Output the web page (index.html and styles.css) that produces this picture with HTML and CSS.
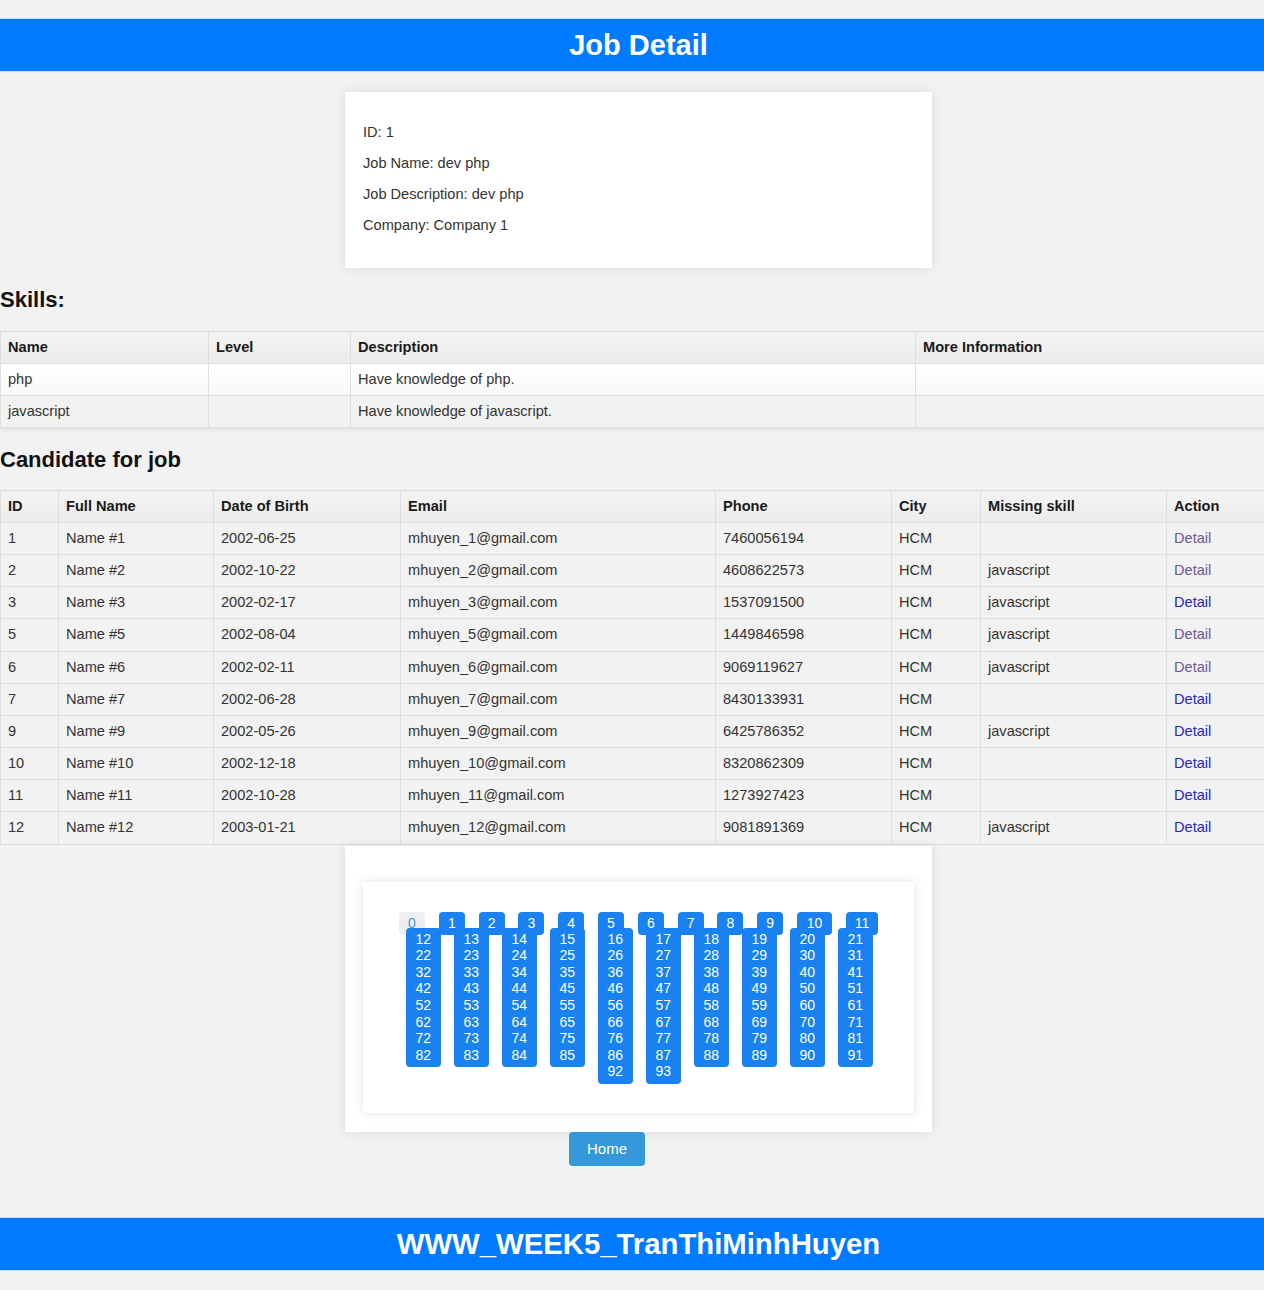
FILE: index.html
```html
<!DOCTYPE html>
<html>
<head>
<meta charset="utf-8">
<title>Job Detail</title>
<link rel="stylesheet" href="styles.css">
</head>
<body>
<div class="page">
  <header class="bar bar-top"><h1>Job Detail</h1></header>

  <section class="card info">
    <p>ID: 1</p>
    <p>Job Name: dev php</p>
    <p>Job Description: dev php</p>
    <p>Company: Company 1</p>
  </section>

  <h3 class="section-title">Skills:</h3>
  <table class="tbl skills">
    <colgroup>
      <col class="w208"><col class="w142"><col class="w565"><col>
    </colgroup>
    <thead>
      <tr><th>Name</th><th>Level</th><th>Description</th><th>More Information</th></tr>
    </thead>
    <tbody>
      <tr class="row-light"><td>php</td><td></td><td>Have knowledge of php.</td><td></td></tr>
      <tr><td>javascript</td><td></td><td>Have knowledge of javascript.</td><td></td></tr>
    </tbody>
  </table>

  <h3 class="section-title title-cands">Candidate for job</h3>
  <table class="tbl cands">
    <colgroup>
      <col class="c58"><col class="c155"><col class="c187"><col class="c315"><col class="c176"><col class="c89"><col class="c186"><col>
    </colgroup>
    <thead>
      <tr><th>ID</th><th>Full Name</th><th>Date of Birth</th><th>Email</th><th>Phone</th><th>City</th><th>Missing skill</th><th>Action</th></tr>
    </thead>
    <tbody>
      <tr><td>1</td><td>Name #1</td><td>2002-06-25</td><td>mhuyen_1@gmail.com</td><td>7460056194</td><td>HCM</td><td></td><td><a class="visited" href="#">Detail</a></td></tr>
      <tr><td>2</td><td>Name #2</td><td>2002-10-22</td><td>mhuyen_2@gmail.com</td><td>4608622573</td><td>HCM</td><td>javascript</td><td><a class="visited" href="#">Detail</a></td></tr>
      <tr><td>3</td><td>Name #3</td><td>2002-02-17</td><td>mhuyen_3@gmail.com</td><td>1537091500</td><td>HCM</td><td>javascript</td><td><a class="link" href="#">Detail</a></td></tr>
      <tr><td>5</td><td>Name #5</td><td>2002-08-04</td><td>mhuyen_5@gmail.com</td><td>1449846598</td><td>HCM</td><td>javascript</td><td><a class="visited" href="#">Detail</a></td></tr>
      <tr><td>6</td><td>Name #6</td><td>2002-02-11</td><td>mhuyen_6@gmail.com</td><td>9069119627</td><td>HCM</td><td>javascript</td><td><a class="visited" href="#">Detail</a></td></tr>
      <tr><td>7</td><td>Name #7</td><td>2002-06-28</td><td>mhuyen_7@gmail.com</td><td>8430133931</td><td>HCM</td><td></td><td><a class="link" href="#">Detail</a></td></tr>
      <tr><td>9</td><td>Name #9</td><td>2002-05-26</td><td>mhuyen_9@gmail.com</td><td>6425786352</td><td>HCM</td><td>javascript</td><td><a class="link" href="#">Detail</a></td></tr>
      <tr><td>10</td><td>Name #10</td><td>2002-12-18</td><td>mhuyen_10@gmail.com</td><td>8320862309</td><td>HCM</td><td></td><td><a class="link" href="#">Detail</a></td></tr>
      <tr><td>11</td><td>Name #11</td><td>2002-10-28</td><td>mhuyen_11@gmail.com</td><td>1273927423</td><td>HCM</td><td></td><td><a class="link" href="#">Detail</a></td></tr>
      <tr><td>12</td><td>Name #12</td><td>2003-01-21</td><td>mhuyen_12@gmail.com</td><td>9081891369</td><td>HCM</td><td>javascript</td><td><a class="link" href="#">Detail</a></td></tr>
    </tbody>
  </table>

  <section class="card pager-card">
    <div class="pager">
      <div class="tabs">
        <span class="tab tab-active">0</span>
        <span class="tab">1</span>
        <span class="tab">2</span>
        <span class="tab">3</span>
        <span class="tab">4</span>
        <span class="tab">5</span>
        <span class="tab">6</span>
        <span class="tab">7</span>
        <span class="tab">8</span>
        <span class="tab">9</span>
        <span class="tab tab-10">10</span>
        <span class="tab tab-11">11</span>
      </div>
      <div class="cols">
        <div class="col"><span>12</span><span>22</span><span>32</span><span>42</span><span>52</span><span>62</span><span>72</span><span>82</span></div>
        <div class="col"><span>13</span><span>23</span><span>33</span><span>43</span><span>53</span><span>63</span><span>73</span><span>83</span></div>
        <div class="col"><span>14</span><span>24</span><span>34</span><span>44</span><span>54</span><span>64</span><span>74</span><span>84</span></div>
        <div class="col"><span>15</span><span>25</span><span>35</span><span>45</span><span>55</span><span>65</span><span>75</span><span>85</span></div>
        <div class="col"><span>16</span><span>26</span><span>36</span><span>46</span><span>56</span><span>66</span><span>76</span><span>86</span><span>92</span></div>
        <div class="col"><span>17</span><span>27</span><span>37</span><span>47</span><span>57</span><span>67</span><span>77</span><span>87</span><span>93</span></div>
        <div class="col"><span>18</span><span>28</span><span>38</span><span>48</span><span>58</span><span>68</span><span>78</span><span>88</span></div>
        <div class="col"><span>19</span><span>29</span><span>39</span><span>49</span><span>59</span><span>69</span><span>79</span><span>89</span></div>
        <div class="col"><span>20</span><span>30</span><span>40</span><span>50</span><span>60</span><span>70</span><span>80</span><span>90</span></div>
        <div class="col"><span>21</span><span>31</span><span>41</span><span>51</span><span>61</span><span>71</span><span>81</span><span>91</span></div>
      </div>
    </div>
  </section>

  <div class="home-row"><a class="home-btn" href="#">Home</a></div>

  <footer class="bar bar-bottom"><h1>WWW_WEEK5_TranThiMinhHuyen</h1></footer>
</div>
</body>
</html>
```

FILE: styles.css
```css
html {
  overflow-x: hidden;
  background: #f2f2f2;
}
body {
  margin: 0;
  background: #f2f2f2;
  font-family: "Liberation Sans", Arial, sans-serif;
  color: #333;
}
.page {
  width: 1277px;
  padding-top: 19px;
  padding-bottom: 20px;
}
.bar {
  background: #007bff;
  height: 52px;
  display: flex;
  align-items: center;
  justify-content: center;
  box-shadow: 0 0 0 1px rgba(120, 180, 255, 0.35);
}
.bar h1 {
  margin: 0;
  color: #fff;
  font-size: 29px;
  font-weight: bold;
  line-height: 34px;
}
.bar-bottom h1 {
  font-size: 29.3px;
}
.card {
  background: #fff;
  width: 587px;
  margin: 0 auto;
  box-sizing: border-box;
  box-shadow: 0 0 10px rgba(0, 0, 0, 0.1);
}
.info {
  margin-top: 21px;
  padding: 17px 18px 20px;
  height: 176px;
}
.info p {
  margin: 15px 0;
  font-size: 14.6px;
  line-height: 16px;
  color: #333;
}
.section-title {
  margin: 19px 0;
  font-size: 22px;
  line-height: 25px;
  color: #111;
  font-weight: bold;
}
.title-cands {
  margin-bottom: 18px;
}
.tbl {
  width: 100%;
  border-collapse: collapse;
  table-layout: fixed;
  font-size: 14.6px;
}
.tbl th, .tbl td {
  border: 1px solid #dedede;
  padding: 7px 7px;
  line-height: 17px;
  text-align: left;
  white-space: nowrap;
  overflow: hidden;
}
.cands td {
  line-height: 17.15px;
}
.tbl th {
  font-weight: bold;
  color: #1a1a1a;
  background: linear-gradient(#f3f3f3, #ececec);
}
.tbl td {
  color: #333;
}
.skills {
  box-shadow: 0 2px 4px rgba(0, 0, 0, 0.08);
}
.skills thead tr {
  box-shadow: 0 2px 3px rgba(0, 0, 0, 0.06);
}
.row-light td {
  background: linear-gradient(#ffffff, #f8f8f8);
}
.w208 { width: 208px; }
.w142 { width: 142px; }
.w565 { width: 565px; }
.c58 { width: 58px; }
.c155 { width: 155px; }
.c187 { width: 187px; }
.c315 { width: 315px; }
.c176 { width: 176px; }
.c89 { width: 89px; }
.c186 { width: 186px; }
.cands td {
  background: #f2f2f2;
}
a.visited {
  color: #6c5a99;
  text-decoration: none;
}
a.link {
  color: #2626c9;
  text-decoration: none;
}
.pager-card {
  margin-top: 1px;
  padding: 36px 18px 19px;
  height: 286px;
}
.pager {
  background: #fff;
  height: 231px;
  box-sizing: border-box;
  padding: 30px 0 0 36px;
  box-shadow: 0 0 10px rgba(0, 0, 0, 0.12);
}
.tabs {
  display: flex;
  gap: 13.8px;
  height: 23px;
}
.tab {
  width: 26px;
  height: 23px;
  background: #1a82f0;
  color: #fff;
  border-radius: 4px;
  font-size: 14px;
  line-height: 23px;
  text-align: center;
}
.tab-active {
  background: #eeeeee;
  color: #4a90e2;
}
.tab-10 { width: 35px; }
.tab-11 { width: 32.5px; }
.cols {
  display: flex;
  align-items: flex-start;
  gap: 13.5px;
  margin-top: -7px;
  margin-left: 7px;
  position: relative;
}
.col {
  width: 34.5px;
  background: #1a82f0;
  border-radius: 4px;
  padding: 3px 0 4px;
  display: flex;
  flex-direction: column;
  align-items: center;
}
.col span {
  color: #fff;
  font-size: 14px;
  line-height: 16.6px;
}
.home-row {
  padding-left: 569px;
  padding-top: 0;
  height: 86px;
}
.home-btn {
  display: inline-block;
  width: 76px;
  height: 34px;
  line-height: 34px;
  text-align: center;
  background: #3498db;
  color: #fff;
  border-radius: 4px;
  font-size: 15px;
  text-decoration: none;
}
```
